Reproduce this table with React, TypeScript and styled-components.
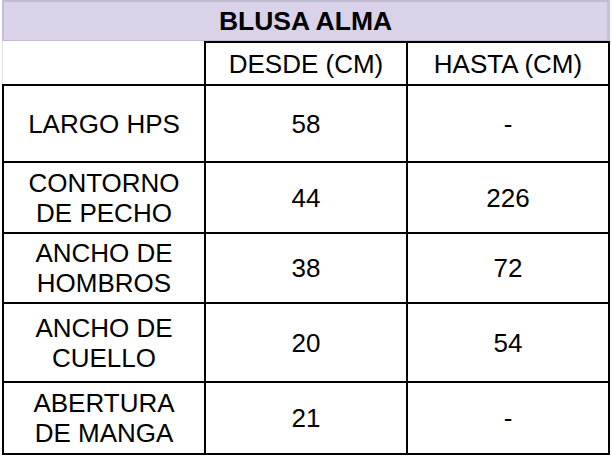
import styled, { createGlobalStyle } from "styled-components";

const GlobalStyle = createGlobalStyle`
    html, body {
        margin: 0;
        padding: 0;
        background: #ffffff;
    }
    body {
        font-family: "Liberation Sans", Arial, sans-serif;
        color: #000000;
    }
`;

// Size chart laid out as a grid, each cell draws its own top/left border
const Sheet = styled.div`
    width: 612px;
    height: 458px;
    box-sizing: border-box;
    padding-left: 2px;
    overflow: hidden;
`;

const Chart = styled.div`
    display: grid;
    grid-template-columns: 202px 202px 204px;
    grid-template-rows: 41px 43px 77px 71px 70px 79px 74px;
`;

const Title = styled.div`
    grid-column: 1 / span 3;
    box-sizing: border-box;
    background: #d9d2e9;
    border-top: 2px solid #c2bcd3;
    border-bottom: 1px solid #c2bcd3;
    border-left: 2px solid #c6c0d6;
    border-right: 3px solid #c6c0d6;
    display: flex;
    align-items: center;
    justify-content: center;
    font-size: 26.5px;
    font-weight: bold;
    padding-top: 1px;
`;

const Blank = styled.div`
    box-sizing: border-box;
    border-left: 1px solid #e0e0e0;
`;

const Cell = styled.div<{ $last?: boolean; $bottom?: boolean }>`
    box-sizing: border-box;
    border-top: 2px solid #000;
    border-left: 2px solid #000;
    border-right: ${(p) => (p.$last ? "2px solid #000" : "none")};
    border-bottom: ${(p) => (p.$bottom ? "2px solid #000" : "none")};
    display: flex;
    align-items: center;
    justify-content: center;
    text-align: center;
    font-size: 26px;
    line-height: 30px;
`;

const rows = [
    { name: ["LARGO HPS"], from: "58", to: "-" },
    { name: ["CONTORNO", "DE PECHO"], from: "44", to: "226" },
    { name: ["ANCHO DE", "HOMBROS"], from: "38", to: "72" },
    { name: ["ANCHO DE", "CUELLO"], from: "20", to: "54" },
    { name: ["ABERTURA", "DE MANGA"], from: "21", to: "-" },
];

export default function App() {
    return (
        <>
            <GlobalStyle />
            <Sheet>
                <Chart>
                    <Title>BLUSA ALMA</Title>
                    <Blank />
                    <Cell>DESDE (CM)</Cell>
                    <Cell $last>HASTA (CM)</Cell>
                    {rows.map((r, i) => {
                        const bottom = i === rows.length - 1;
                        return [
                            <Cell key={r.from + "a" + i} $bottom={bottom}>
                                <div>
                                    {r.name.map((line) => (
                                        <div key={line}>{line}</div>
                                    ))}
                                </div>
                            </Cell>,
                            <Cell key={r.from + "b" + i} $bottom={bottom}>{r.from}</Cell>,
                            <Cell key={r.from + "c" + i} $bottom={bottom} $last>{r.to}</Cell>,
                        ];
                    })}
                </Chart>
            </Sheet>
        </>
    );
}
